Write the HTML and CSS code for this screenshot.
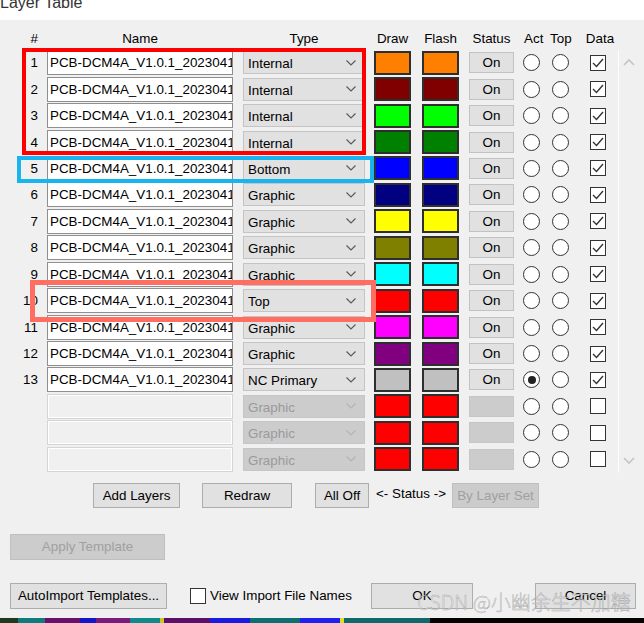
FILE: index.html
```html
<!DOCTYPE html>
<html>
<head>
<meta charset="utf-8">
<link rel="stylesheet" href="styles.css">
</head>
<body>
<div class="titlebar"><span>Layer Table</span></div>
<div class="panel">
  <div class="head">
    <div class="h-num">#</div>
    <div class="h-name">Name</div>
    <div class="h-type">Type</div>
    <div class="h-draw">Draw</div>
    <div class="h-flash">Flash</div>
    <div class="h-status">Status</div>
    <div class="h-act">Act</div>
    <div class="h-top">Top</div>
    <div class="h-data">Data</div>
  </div>
  <div class="tbody">
    <div class="grid">
      <div class="num">1</div><div class="name">PCB-DCM4A_V1.0.1_20230412</div><div class="type"><span>Internal</span><svg class="chev" width="10" height="6" viewBox="0 0 10 6"><path d="M0.5 0.5 L5 5 L9.5 0.5"/></svg></div><div class="sw draw c-orange"></div><div class="sw flash c-orange"></div><div class="status">On</div><div class="radio act"></div><div class="radio top"></div><div class="chk"><svg width="14" height="14" viewBox="0 0 14 14"><path d="M2 7 L5.5 10.5 L12 3"/></svg></div>
      <div class="num">2</div><div class="name">PCB-DCM4A_V1.0.1_20230412</div><div class="type"><span>Internal</span><svg class="chev" width="10" height="6" viewBox="0 0 10 6"><path d="M0.5 0.5 L5 5 L9.5 0.5"/></svg></div><div class="sw draw c-maroon"></div><div class="sw flash c-maroon"></div><div class="status">On</div><div class="radio act"></div><div class="radio top"></div><div class="chk"><svg width="14" height="14" viewBox="0 0 14 14"><path d="M2 7 L5.5 10.5 L12 3"/></svg></div>
      <div class="num">3</div><div class="name">PCB-DCM4A_V1.0.1_20230412</div><div class="type"><span>Internal</span><svg class="chev" width="10" height="6" viewBox="0 0 10 6"><path d="M0.5 0.5 L5 5 L9.5 0.5"/></svg></div><div class="sw draw c-lime"></div><div class="sw flash c-lime"></div><div class="status">On</div><div class="radio act"></div><div class="radio top"></div><div class="chk"><svg width="14" height="14" viewBox="0 0 14 14"><path d="M2 7 L5.5 10.5 L12 3"/></svg></div>
      <div class="num">4</div><div class="name">PCB-DCM4A_V1.0.1_20230412</div><div class="type"><span>Internal</span><svg class="chev" width="10" height="6" viewBox="0 0 10 6"><path d="M0.5 0.5 L5 5 L9.5 0.5"/></svg></div><div class="sw draw c-green"></div><div class="sw flash c-green"></div><div class="status">On</div><div class="radio act"></div><div class="radio top"></div><div class="chk"><svg width="14" height="14" viewBox="0 0 14 14"><path d="M2 7 L5.5 10.5 L12 3"/></svg></div>
      <div class="num">5</div><div class="name">PCB-DCM4A_V1.0.1_20230412</div><div class="type"><span>Bottom</span><svg class="chev" width="10" height="6" viewBox="0 0 10 6"><path d="M0.5 0.5 L5 5 L9.5 0.5"/></svg></div><div class="sw draw c-blue"></div><div class="sw flash c-blue"></div><div class="status">On</div><div class="radio act"></div><div class="radio top"></div><div class="chk"><svg width="14" height="14" viewBox="0 0 14 14"><path d="M2 7 L5.5 10.5 L12 3"/></svg></div>
      <div class="num">6</div><div class="name">PCB-DCM4A_V1.0.1_20230412</div><div class="type"><span>Graphic</span><svg class="chev" width="10" height="6" viewBox="0 0 10 6"><path d="M0.5 0.5 L5 5 L9.5 0.5"/></svg></div><div class="sw draw c-navy"></div><div class="sw flash c-navy"></div><div class="status">On</div><div class="radio act"></div><div class="radio top"></div><div class="chk"><svg width="14" height="14" viewBox="0 0 14 14"><path d="M2 7 L5.5 10.5 L12 3"/></svg></div>
      <div class="num">7</div><div class="name">PCB-DCM4A_V1.0.1_20230412</div><div class="type"><span>Graphic</span><svg class="chev" width="10" height="6" viewBox="0 0 10 6"><path d="M0.5 0.5 L5 5 L9.5 0.5"/></svg></div><div class="sw draw c-yellow"></div><div class="sw flash c-yellow"></div><div class="status">On</div><div class="radio act"></div><div class="radio top"></div><div class="chk"><svg width="14" height="14" viewBox="0 0 14 14"><path d="M2 7 L5.5 10.5 L12 3"/></svg></div>
      <div class="num">8</div><div class="name">PCB-DCM4A_V1.0.1_20230412</div><div class="type"><span>Graphic</span><svg class="chev" width="10" height="6" viewBox="0 0 10 6"><path d="M0.5 0.5 L5 5 L9.5 0.5"/></svg></div><div class="sw draw c-olive"></div><div class="sw flash c-olive"></div><div class="status">On</div><div class="radio act"></div><div class="radio top"></div><div class="chk"><svg width="14" height="14" viewBox="0 0 14 14"><path d="M2 7 L5.5 10.5 L12 3"/></svg></div>
      <div class="num">9</div><div class="name">PCB-DCM4A_V1.0.1_20230412</div><div class="type"><span>Graphic</span><svg class="chev" width="10" height="6" viewBox="0 0 10 6"><path d="M0.5 0.5 L5 5 L9.5 0.5"/></svg></div><div class="sw draw c-cyan"></div><div class="sw flash c-cyan"></div><div class="status">On</div><div class="radio act"></div><div class="radio top"></div><div class="chk"><svg width="14" height="14" viewBox="0 0 14 14"><path d="M2 7 L5.5 10.5 L12 3"/></svg></div>
      <div class="num">10</div><div class="name">PCB-DCM4A_V1.0.1_20230412</div><div class="type"><span>Top</span><svg class="chev" width="10" height="6" viewBox="0 0 10 6"><path d="M0.5 0.5 L5 5 L9.5 0.5"/></svg></div><div class="sw draw c-red"></div><div class="sw flash c-red"></div><div class="status">On</div><div class="radio act"></div><div class="radio top"></div><div class="chk"><svg width="14" height="14" viewBox="0 0 14 14"><path d="M2 7 L5.5 10.5 L12 3"/></svg></div>
      <div class="num">11</div><div class="name">PCB-DCM4A_V1.0.1_20230412</div><div class="type"><span>Graphic</span><svg class="chev" width="10" height="6" viewBox="0 0 10 6"><path d="M0.5 0.5 L5 5 L9.5 0.5"/></svg></div><div class="sw draw c-magenta"></div><div class="sw flash c-magenta"></div><div class="status">On</div><div class="radio act"></div><div class="radio top"></div><div class="chk"><svg width="14" height="14" viewBox="0 0 14 14"><path d="M2 7 L5.5 10.5 L12 3"/></svg></div>
      <div class="num">12</div><div class="name">PCB-DCM4A_V1.0.1_20230412</div><div class="type"><span>Graphic</span><svg class="chev" width="10" height="6" viewBox="0 0 10 6"><path d="M0.5 0.5 L5 5 L9.5 0.5"/></svg></div><div class="sw draw c-purple"></div><div class="sw flash c-purple"></div><div class="status">On</div><div class="radio act"></div><div class="radio top"></div><div class="chk"><svg width="14" height="14" viewBox="0 0 14 14"><path d="M2 7 L5.5 10.5 L12 3"/></svg></div>
      <div class="num">13</div><div class="name">PCB-DCM4A_V1.0.1_20230412</div><div class="type"><span>NC Primary</span><svg class="chev" width="10" height="6" viewBox="0 0 10 6"><path d="M0.5 0.5 L5 5 L9.5 0.5"/></svg></div><div class="sw draw c-silver"></div><div class="sw flash c-silver"></div><div class="status">On</div><div class="radio act on"></div><div class="radio top"></div><div class="chk"><svg width="14" height="14" viewBox="0 0 14 14"><path d="M2 7 L5.5 10.5 L12 3"/></svg></div>
      <div class="num"></div><div class="name off"></div><div class="type off"><span>Graphic</span><svg class="chev" width="10" height="6" viewBox="0 0 10 6"><path d="M0.5 0.5 L5 5 L9.5 0.5"/></svg></div><div class="sw draw c-red"></div><div class="sw flash c-red"></div><div class="status off"></div><div class="radio act"></div><div class="radio top"></div><div class="chk"></div>
      <div class="num"></div><div class="name off"></div><div class="type off"><span>Graphic</span><svg class="chev" width="10" height="6" viewBox="0 0 10 6"><path d="M0.5 0.5 L5 5 L9.5 0.5"/></svg></div><div class="sw draw c-red"></div><div class="sw flash c-red"></div><div class="status off"></div><div class="radio act"></div><div class="radio top"></div><div class="chk"></div>
      <div class="num"></div><div class="name off"></div><div class="type off"><span>Graphic</span><svg class="chev" width="10" height="6" viewBox="0 0 10 6"><path d="M0.5 0.5 L5 5 L9.5 0.5"/></svg></div><div class="sw draw c-red"></div><div class="sw flash c-red"></div><div class="status off"></div><div class="radio act"></div><div class="radio top"></div><div class="chk"></div>
    </div>
    <div class="scroll">
      <svg class="arrow" width="12" height="8" viewBox="0 0 12 8"><path d="M1 7 L6 2 L11 7"/></svg>
      <svg class="arrow" width="12" height="8" viewBox="0 0 12 8"><path d="M1 1 L6 6 L11 1"/></svg>
    </div>
  </div>

  <div class="row-actions">
    <div class="btn b-add">Add Layers</div>
    <div class="btn b-redraw">Redraw</div>
    <div class="btn b-alloff">All Off</div>
    <div class="status-label">&lt;- Status -&gt;</div>
    <div class="btn disabled b-layerset">By Layer Set</div>
  </div>

  <div class="row-template">
    <div class="btn disabled b-apply">Apply Template</div>
  </div>

  <div class="row-bottom">
    <div class="btn b-auto">AutoImport Templates...</div>
    <div class="chk small"></div>
    <div class="viewlabel">View Import File Names</div>
    <div class="btn b-ok">OK</div>
    <div class="btn b-cancel">Cancel</div>
  </div>
</div>
<div class="strip"></div>

<div class="hl hl-red"></div>
<div class="hl hl-blue"></div>
<div class="hl hl-coral"></div>
<div class="watermark">CSDN @小幽余生不加糖</div>
</body>
</html>
```

FILE: styles.css
```css
* { box-sizing: border-box; }
html, body { margin: 0; padding: 0; }
body {
  width: 644px;
  height: 623px;
  overflow: hidden;
  position: relative;
  background: #f0f0f0;
  font-family: "Liberation Sans", Arial, sans-serif;
  font-size: 13.4px;
  color: #000;
}

.titlebar {
  height: 20px;
  background: #fff;
  overflow: hidden;
  font-family: "Liberation Sans", sans-serif;
  font-size: 16px;
  color: #333;
}
.titlebar span { display: block; line-height: 12px; margin-top: -3px; }

.panel {
  height: 598px;
  padding-top: 8px;
  display: flex;
  flex-direction: column;
}

.head, .grid {
  display: grid;
  grid-template-columns: 43px 195px 131px 47px 48px 54px 27px 30px 43px;
}
.head { height: 21.5px; align-items: center; width: 618px; line-height: 16px; padding-top: 1px; }
.h-num { text-align: right; padding-right: 5px; }
.h-name { margin-left: 4px; width: 186px; text-align: center; }
.h-type { margin-left: 5px; width: 122px; text-align: center; }
.h-draw { margin-left: 3px; width: 41px; text-align: center; }
.h-flash { margin-left: 4px; width: 41px; text-align: center; }
.h-status { margin-left: 3px; width: 49px; text-align: center; }
.h-act { margin-left: 6px; width: 21px; text-align: left; }
.h-top { margin-left: 5px; width: 26px; text-align: left; }
.h-data { margin-left: 10px; width: 30px; text-align: center; }

.tbody { display: flex; }
.grid { grid-auto-rows: 26.45px; align-items: center; width: 618px; }

.num { text-align: right; padding-right: 5px; line-height: 16px; padding-top: 1px; }
.name {
  margin-left: 4px;
  width: 186px;
  height: 25px;
  background: #fff;
  border: 1px solid #8f8f8f;
  padding: 1px 2px 0;
  line-height: 22px;
  overflow: hidden;
  white-space: nowrap;
}
.name.off {
  background: #f0f0f0;
  border: 1px solid #d4d4d4;
  box-shadow: inset 1px 1px 0 #fff, inset -1px -1px 0 #fff;
}
.type {
  margin-left: 5px;
  width: 122px;
  height: 23px;
  background: #e1e1e1;
  border: 1px solid #c4c4c4;
  padding: 0 8px 0 4px;
  display: flex;
  align-items: center;
  justify-content: space-between;
  white-space: nowrap;
}
.type span { line-height: 16px; padding-top: 3px; }
.chev path { fill: none; stroke: #5a5a5a; stroke-width: 1.2; }
.type.off { background: #cccccc; border-color: #c6c6c6; color: #9a9a9a; }
.type.off .chev path { stroke: #b4b4b4; }

.sw { width: 37px; height: 24px; border: 2px solid #2e2e2e; }
.draw { margin-left: 5px; }
.flash { margin-left: 6px; }
.c-orange { background: #ff8000; }
.c-maroon { background: #800000; }
.c-lime { background: #00ff00; }
.c-green { background: #008000; }
.c-blue { background: #0000ff; }
.c-navy { background: #000080; }
.c-yellow { background: #ffff00; }
.c-olive { background: #808000; }
.c-cyan { background: #00ffff; }
.c-red { background: #ff0000; }
.c-magenta { background: #ff00ff; }
.c-purple { background: #800080; }
.c-silver { background: #c0c0c0; }

.status {
  margin-left: 5px;
  width: 45px;
  height: 21px;
  background: #e1e1e1;
  border: 1px solid #c2c2c2;
  text-align: center;
  line-height: 19px;
}
.status.off { background: #cccccc; border-color: #c6c6c6; }

.radio {
  width: 17px;
  height: 17px;
  border: 1px solid #333;
  border-radius: 50%;
  background: #fff;
  display: flex;
  align-items: center;
  justify-content: center;
}
.radio.act { margin-left: 5px; }
.radio.top { margin-left: 7px; }
.radio.on::after {
  content: "";
  width: 8px;
  height: 8px;
  border-radius: 50%;
  background: #222;
}

.chk {
  margin-left: 15px;
  width: 16px;
  height: 16px;
  border: 1px solid #333;
  background: #fff;
  display: flex;
  align-items: center;
  justify-content: center;
}
.chk svg path { fill: none; stroke: #333; stroke-width: 1.4; }

.scroll {
  width: 26px;
  border-left: 1px solid #fdfdfd;
  display: flex;
  flex-direction: column;
  justify-content: space-between;
  align-items: center;
  padding: 8px 6px 8px 0;
}
.arrow path { fill: none; stroke: #c4c4c4; stroke-width: 1.6; }

.btn {
  height: 25px;
  background: #e1e1e1;
  border: 1px solid #adadad;
  display: flex;
  align-items: center;
  justify-content: center;
  white-space: nowrap;
  line-height: 16px;
  padding-top: 1px;
}
.btn.disabled { background: #cccccc; border-color: #bfbfbf; color: #a0a0a0; }

.row-actions {
  margin-top: 10.3px;
  height: 25px;
  display: flex;
  align-items: center;
  padding-left: 93px;
}
.b-add { width: 87px; }
.b-redraw { width: 90px; margin-left: 22px; }
.b-alloff { width: 54px; margin-left: 23px; }
.status-label { margin-left: 7px; width: 76px; line-height: 16px; padding-bottom: 2px; white-space: nowrap; }
.b-layerset { width: 87px; }

.row-template {
  margin-top: 26px;
  height: 26px;
  display: flex;
  padding-left: 10px;
}
.b-apply { width: 155px; height: 26px; }

.row-bottom {
  margin-top: 23px;
  height: 26px;
  display: flex;
  align-items: center;
  padding: 0 8px 0 10px;
}
.b-auto { width: 157px; height: 26px; }
.chk.small { margin-left: 23px; }
.viewlabel { margin-left: 4px; line-height: 16px; white-space: nowrap; }
.b-ok { width: 102px; height: 26px; margin-left: auto; }
.b-cancel { width: 101px; height: 26px; margin-left: 62px; }

.strip {
  height: 5px;
  background: linear-gradient(90deg,
    #1d3a1d 0, #1d3a1d 18px, #0d7c7c 18px, #0d7c7c 45px,
    #6a106a 45px, #6a106a 80px, #1515c8 80px, #1515c8 96px,
    #7a1a7a 96px, #7a1a7a 130px, #0f8a8a 130px, #0f8a8a 160px,
    #c8c820 160px, #c8c820 164px, #5a0f6a 164px, #5a0f6a 210px,
    #1a1ae0 210px, #1a1ae0 250px, #0d7070 250px, #0d7070 300px,
    #2020f0 300px, #2020f0 340px, #e0e020 340px, #e0e020 344px,
    #0e6a6a 344px, #0e6a6a 430px, #000 430px, #000 100%);
}

.hl { position: absolute; pointer-events: none; }
.hl-red { left: 22px; top: 48px; width: 344px; height: 107px; border: 4px solid #ff0000; }
.hl-blue { left: 17px; top: 156px; width: 357px; height: 27px; border: 4px solid #19b3ee; }
.hl-coral { left: 30px; top: 280px; width: 346px; height: 42px; border: 5px solid #ff6e60; }

.watermark {
  position: absolute;
  left: 417px;
  top: 592px;
  font-family: "Noto Sans CJK SC", "Liberation Sans", sans-serif;
  font-weight: 300;
  font-size: 20px;
  line-height: 20px;
  white-space: nowrap;
  color: rgba(255, 255, 255, 0.6);
  -webkit-text-stroke: 0.5px rgba(120, 120, 120, 0.6);
}
```
